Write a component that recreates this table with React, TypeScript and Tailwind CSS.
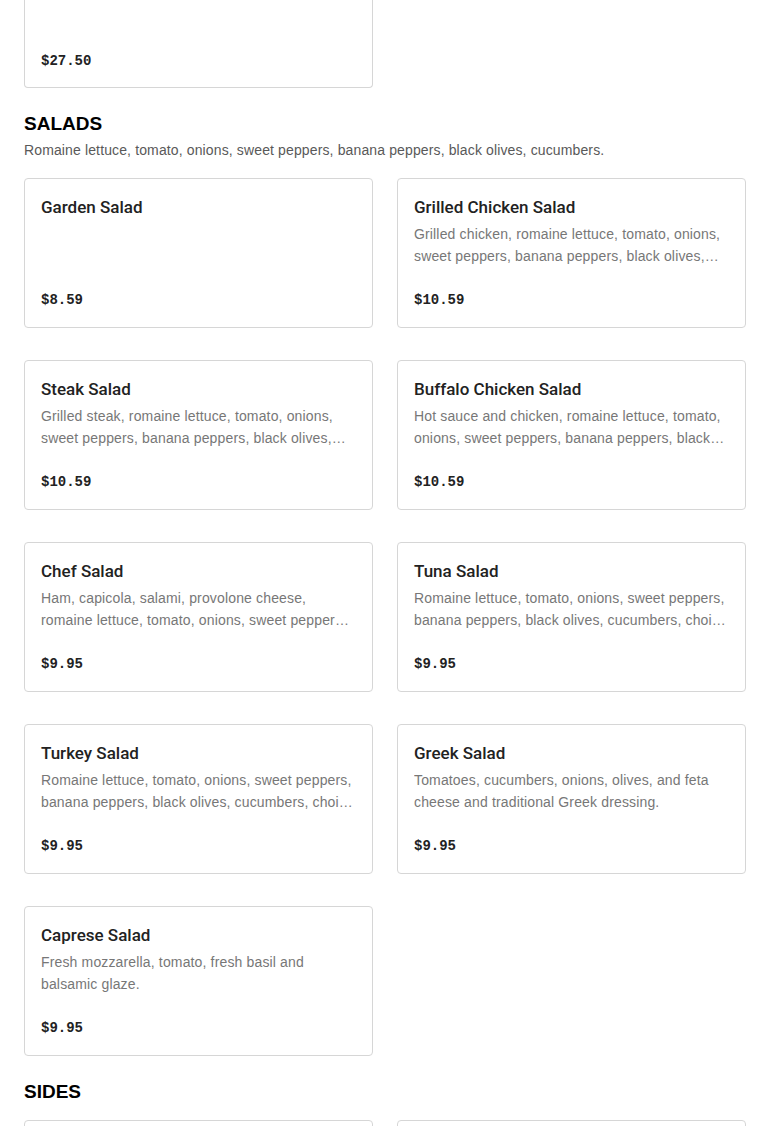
type Item = { name: string; desc?: string; price: string };

const salads: Item[] = [
  { name: "Garden Salad", price: "$8.59" },
  {
    name: "Grilled Chicken Salad",
    desc: "Grilled chicken, romaine lettuce, tomato, onions, sweet peppers, banana peppers, black olives, cucumbers.",
    price: "$10.59",
  },
  {
    name: "Steak Salad",
    desc: "Grilled steak, romaine lettuce, tomato, onions, sweet peppers, banana peppers, black olives, cucumbers.",
    price: "$10.59",
  },
  {
    name: "Buffalo Chicken Salad",
    desc: "Hot sauce and chicken, romaine lettuce, tomato, onions, sweet peppers, banana peppers, black olives, cucumbers.",
    price: "$10.59",
  },
  {
    name: "Chef Salad",
    desc: "Ham, capicola, salami, provolone cheese, romaine lettuce, tomato, onions, sweet peppers, banana peppers, black olives.",
    price: "$9.95",
  },
  {
    name: "Tuna Salad",
    desc: "Romaine lettuce, tomato, onions, sweet peppers, banana peppers, black olives, cucumbers, choice of dressing.",
    price: "$9.95",
  },
  {
    name: "Turkey Salad",
    desc: "Romaine lettuce, tomato, onions, sweet peppers, banana peppers, black olives, cucumbers, choice of dressing.",
    price: "$9.95",
  },
  {
    name: "Greek Salad",
    desc: "Tomatoes, cucumbers, onions, olives, and feta cheese and traditional Greek dressing.",
    price: "$9.95",
  },
  {
    name: "Caprese Salad",
    desc: "Fresh mozzarella, tomato, fresh basil and balsamic glaze.",
    price: "$9.95",
  },
];

const sans = "font-['Liberation_Sans',Arial,sans-serif]";
const mono = "font-['Liberation_Mono','Courier_New',monospace]";

function Card({ item }: { item: Item }) {
  return (
    <div className="h-[150px] flex flex-col border border-[#d6d6d6] rounded-[4px] bg-white px-4 pt-4 pb-4">
      <h3 className="text-[17px] leading-[24px] font-medium text-[#222] font-['Roboto',Arial,sans-serif]">
        {item.name}
      </h3>
      {item.desc && (
        <p className="mt-1 text-[14px] leading-[22px] tracking-[0.15px] text-[#777] line-clamp-2">{item.desc}</p>
      )}
      <span className={`mt-auto text-[14px] leading-[22px] font-bold text-[#222] ${mono}`}>{item.price}</span>
    </div>
  );
}

export default function App() {
  return (
    <div className={`bg-white min-h-screen px-6 ${sans}`}>
      {/* previous card, scrolled off the top */}
      <div className="grid grid-cols-2 gap-x-6">
        <div className="h-[88px] flex flex-col border-x border-b border-[#d6d6d6] rounded-b-[4px] px-4 pb-[15px]">
          <span className={`mt-auto text-[14px] leading-[22px] font-bold text-[#222] ${mono}`}>$27.50</span>
        </div>
      </div>

      {/* Salads */}
      <h2 className="mt-6 text-[19px] leading-[24px] font-bold text-black">SALADS</h2>
      <p className="mt-[3px] text-[14px] leading-[22px] tracking-[0.13px] text-[#595959]">
        Romaine lettuce, tomato, onions, sweet peppers, banana peppers, black olives, cucumbers.
      </p>
      <div className="mt-[17px] grid grid-cols-2 gap-x-6 gap-y-8">
        {salads.map((s) => (
          <Card key={s.name} item={s} />
        ))}
      </div>

      {/* Sides */}
      <h2 className="mt-6 text-[19px] leading-[24px] font-bold text-black">SIDES</h2>
      <div className="mt-4 grid grid-cols-2 gap-x-6 gap-y-8">
        <div className="h-[150px] border border-[#d6d6d6] rounded-[4px]" />
        <div className="h-[150px] border border-[#d6d6d6] rounded-[4px]" />
      </div>
    </div>
  );
}
